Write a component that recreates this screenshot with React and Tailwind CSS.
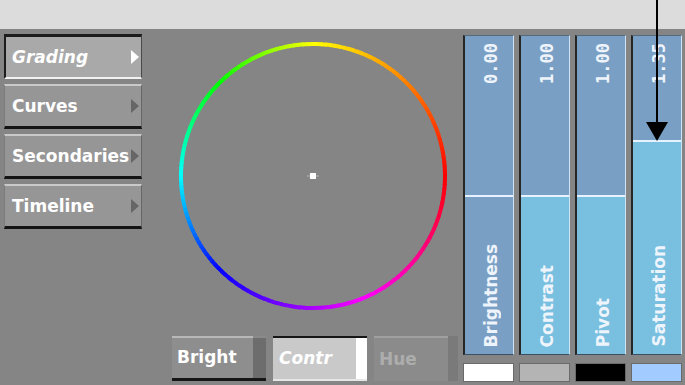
import React from 'react';

const FONT = { fontFamily: '"DejaVu Sans", "Liberation Sans", sans-serif' };
const MONO = { fontFamily: '"DejaVu Sans Mono", "Liberation Mono", monospace' };

// hue around the wheel: angle counter-clockwise from the right edge
function hueAt(deg) {
  const stops = [
    [0, 0], [90, 60], [180, 180], [225, 240], [270, 280], [360, 360],
  ];
  for (let i = 0; i < stops.length - 1; i++) {
    const [a0, h0] = stops[i];
    const [a1, h1] = stops[i + 1];
    if (deg >= a0 && deg <= a1) return h0 + ((deg - a0) / (a1 - a0)) * (h1 - h0);
  }
  return 0;
}

function ColorWheel() {
  const cx = 163;
  const cy = 147;
  const r = 132;
  const n = 180;
  const segs = [];
  for (let i = 0; i < n; i++) {
    const a0 = (i / n) * 360;
    const a1 = ((i + 1.3) / n) * 360;
    const p = (a) => [cx + r * Math.cos((a * Math.PI) / 180), cy - r * Math.sin((a * Math.PI) / 180)];
    const [x0, y0] = p(a0);
    const [x1, y1] = p(a1);
    segs.push(
      <path
        key={i}
        d={`M${x0} ${y0} A${r} ${r} 0 0 0 ${x1} ${y1}`}
        stroke={`hsl(${hueAt((a0 + a1) / 2) % 360}, 100%, 50%)`}
        strokeWidth="4"
        fill="none"
      />
    );
  }
  return (
    <svg width="310" height="290" viewBox="0 0 310 290">
      {segs}
      <rect x={cx - 3} y={cy - 3} width="6" height="6" fill="#fff" />
      <line x1={cx - 6} y1={cy} x2={cx + 6} y2={cy} stroke="#fff" strokeOpacity="0.4" />
    </svg>
  );
}

function Tri({ color }) {
  return (
    <svg width="10" height="14" viewBox="0 0 10 14">
      <polygon points="1,0 9,7 1,14" fill={color} />
    </svg>
  );
}

function MenuButton({ label, selected }) {
  if (selected) {
    return (
      <div className="h-[45px] w-[138px] flex items-center justify-between bg-[#a9a9a9] border-t-[3px] border-l-2 border-b-2 border-r border-t-[#1c1c1c] border-l-[#1c1c1c] border-b-[#f2f2f2] border-r-[#4a4a4a] pl-[6px] pr-[1px]">
        <span className="italic font-bold text-[17px] text-white pt-[2px]" style={FONT}>{label}</span>
        <Tri color="#ffffff" />
      </div>
    );
  }
  return (
    <div className="h-[45px] w-[138px] flex items-center justify-between bg-[#969696] border-t-2 border-l border-b-[3px] border-r border-t-[#c9c9c9] border-l-[#7c7c7c] border-b-[#141414] border-r-[#666] pl-[7px] pr-[1px]">
      <span className="font-bold text-[17px] text-white pt-[2px]" style={FONT}>{label}</span>
      <Tri color="#666666" />
    </div>
  );
}

function Slider({ label, value, fillTop, filled }) {
  return (
    <div className="relative w-[51px] h-[320px] bg-[#7a9fc4] border-l-2 border-l-[#262626] border-t border-t-[#55687c] border-r border-r-[#cfe3f5] border-b border-b-[#3d4f62] overflow-hidden">
      <div
        className={`absolute left-0 right-0 bottom-0 border-t-2 border-t-[#e6f2ff] ${filled ? 'bg-[#78bfe0]' : ''}`}
        style={{ top: fillTop }}
      />
      <div className="relative h-full flex flex-col items-center justify-between pt-[7px] pb-[7px] pl-[4px]">
        <span className="[writing-mode:vertical-rl] rotate-180 font-bold text-[17px] leading-none text-[#eef4fb]" style={MONO}>
          {value}
        </span>
        <span className="[writing-mode:vertical-rl] rotate-180 font-bold text-[17px] leading-none text-[#eef4fb]" style={FONT}>
          {label}
        </span>
      </div>
    </div>
  );
}

export default function App() {
  const sliders = [
    { label: 'Brightness', value: '0.00', fillTop: 159, filled: false, swatch: 'bg-white' },
    { label: 'Contrast', value: '1.00', fillTop: 159, filled: true, swatch: 'bg-[#b4b4b4]' },
    { label: 'Pivot', value: '1.00', fillTop: 159, filled: true, swatch: 'bg-black' },
    { label: 'Saturation', value: '1.35', fillTop: 104, filled: true, swatch: 'bg-[#a2ccff]' },
  ];

  return (
    <div className="relative w-[685px] h-[385px] bg-[#858585] overflow-hidden" style={FONT}>
      <div className="h-[29px] bg-[#dcdcdc]" />

      <div className="flex">
        {/* Left menu */}
        <div className="w-[150px] pl-[4px] pt-[5px] flex flex-col gap-[5px]">
          <MenuButton label="Grading" selected />
          <MenuButton label="Curves" />
          <MenuButton label="Secondaries" />
          <MenuButton label="Timeline" />
        </div>

        {/* Wheel + mode buttons */}
        <div className="w-[313px] flex flex-col">
          <ColorWheel />
          <div className="mt-[17px] pl-[22px] flex gap-[7px]">
            <div className="w-[94px] h-[45px] flex flex-col">
              <div className="flex-1 flex">
                <div className="flex-1 flex items-center pl-[5px] bg-[#8e8e8e] border-t-2 border-t-[#b8b8b8]">
                  <span className="font-bold text-[17px] text-white">Bright</span>
                </div>
                <div className="w-[13px] bg-[#6d6d6d] border-t-2 border-t-[#8a8a8a]" />
              </div>
              <div className="h-[3px] bg-[#161616]" />
            </div>
            <div className="w-[94px] h-[45px] flex flex-col">
              <div className="h-[2px] bg-[#161616]" />
              <div className="flex-1 flex">
                <div className="flex-1 flex items-center pl-[6px] bg-[#c9c9c9]">
                  <span className="italic font-bold text-[17px] text-white">Contr</span>
                </div>
                <div className="w-[11px] bg-white" />
              </div>
              <div className="h-[2px] bg-[#e6e6e6]" />
            </div>
            <div className="w-[84px] h-[45px] flex">
              <div className="flex-1 flex items-center pl-[5px] bg-[#8b8b8b] border-t-2 border-t-[#a0a0a0]">
                <span className="text-[17px] font-bold text-[#adadad]">Hue</span>
              </div>
              <div className="w-[10px] bg-[#7a7a7a]" />
            </div>
          </div>
        </div>

        {/* Sliders */}
        <div className="pt-[6px] flex flex-col gap-[8px]">
          <div className="flex gap-[5px]">
            {sliders.map((s) => (
              <Slider key={s.label} {...s} />
            ))}
          </div>
          <div className="flex gap-[5px]">
            {sliders.map((s) => (
              <div key={s.label} className={`w-[51px] h-[19px] border border-[#6a6a6a] ${s.swatch}`} />
            ))}
          </div>
        </div>
      </div>

      {/* Callout arrow */}
      <svg className="absolute left-[645px] top-0" width="24" height="142" viewBox="0 0 24 142">
        <line x1="12" y1="0" x2="12" y2="124" stroke="#000" strokeWidth="2" />
        <polygon points="1,122 23,122 12,141" fill="#000" />
      </svg>
    </div>
  );
}
